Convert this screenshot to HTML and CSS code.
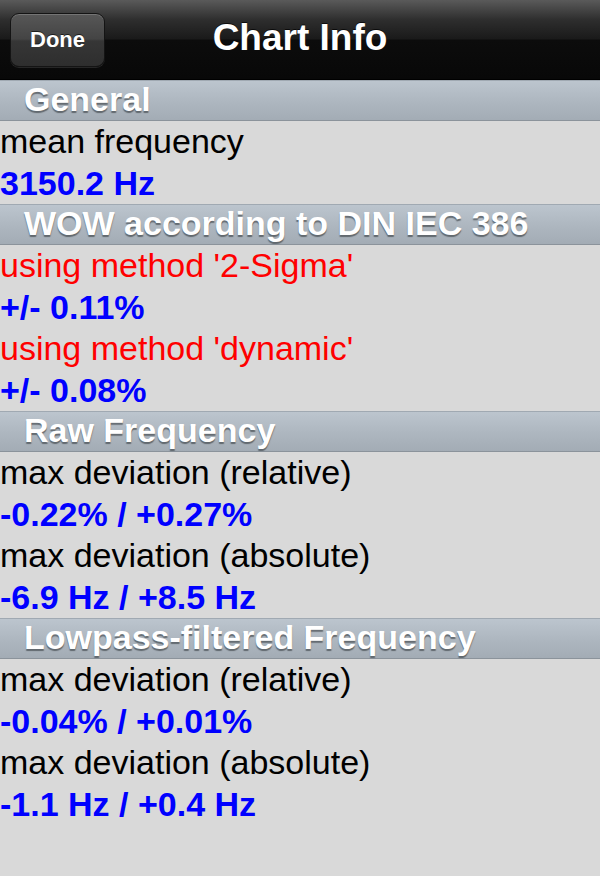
FILE: index.html
```html
<!DOCTYPE html>
<html>
<head>
<meta charset="utf-8">
<title>Chart Info</title>
<link rel="stylesheet" href="styles.css">
</head>
<body>
<div class="screen">
  <header class="navbar">
    <div class="nav-left"><button class="btn-done">Done</button></div>
    <h1 class="nav-title">Chart Info</h1>
    <div class="nav-right"></div>
  </header>

  <section class="group">
    <div class="group-header">General</div>
    <div class="row label">mean frequency</div>
    <div class="row value">3150.2 Hz</div>
  </section>

  <section class="group">
    <div class="group-header">WOW according to DIN IEC 386</div>
    <div class="row label red">using method '2-Sigma'</div>
    <div class="row value">+/- 0.11%</div>
    <div class="row label red">using method 'dynamic'</div>
    <div class="row value">+/- 0.08%</div>
  </section>

  <section class="group">
    <div class="group-header">Raw Frequency</div>
    <div class="row label">max deviation (relative)</div>
    <div class="row value">-0.22% / +0.27%</div>
    <div class="row label">max deviation (absolute)</div>
    <div class="row value">-6.9 Hz / +8.5 Hz</div>
  </section>

  <section class="group">
    <div class="group-header">Lowpass-filtered Frequency</div>
    <div class="row label">max deviation (relative)</div>
    <div class="row value">-0.04% / +0.01%</div>
    <div class="row label">max deviation (absolute)</div>
    <div class="row value">-1.1 Hz / +0.4 Hz</div>
  </section>
</div>
</body>
</html>
```

FILE: styles.css
```css
html, body {
  margin: 0;
  padding: 0;
  background: #d9d9d9;
}

body {
  font-family: "Liberation Sans", Arial, Helvetica, sans-serif;
  width: 600px;
  height: 876px;
  overflow: hidden;
}

.screen {
  display: flex;
  flex-direction: column;
}

.navbar {
  height: 80px;
  box-sizing: border-box;
  display: grid;
  grid-template-columns: 1fr auto 1fr;
  align-items: center;
  background: linear-gradient(to bottom,
    #5a5a5a 0%,
    #2e2e2e 25%,
    #1a1a1a 49%,
    #0c0c0c 51%,
    #080808 100%);
  border-bottom: 1px solid #000;
}

.nav-left {
  display: flex;
  align-items: center;
  padding-left: 10px;
  padding-top: 1px;
}

.btn-done {
  width: 95px;
  height: 54px;
  box-sizing: border-box;
  border-radius: 9px;
  border: 1px solid #141414;
  background: linear-gradient(to bottom,
    #575757 0%,
    #444 48%,
    #363636 52%,
    #2e2e2e 100%);
  box-shadow: inset 0 1px 0 rgba(255,255,255,0.18), 0 1px 0 rgba(255,255,255,0.12);
  color: #fff;
  font-family: "Liberation Sans", Arial, Helvetica, sans-serif;
  font-weight: bold;
  font-size: 22px;
  text-shadow: 0 -1px 0 rgba(0,0,0,0.6);
  padding: 0;
}

.nav-title {
  margin: 0;
  margin-top: -4px;
  color: #fff;
  font-size: 37px;
  font-weight: bold;
  text-shadow: 0 -1px 0 rgba(0,0,0,0.7);
}

.group {
  display: flex;
  flex-direction: column;
}

.group-header {
  height: 41px;
  box-sizing: border-box;
  display: flex;
  align-items: center;
  padding-left: 24px;
  padding-bottom: 2px;
  border-top: 1px solid #a0a9b2;
  border-bottom: 1px solid #8b939b;
  background: linear-gradient(to bottom, #bcc5ce 0%, #adb6bf 55%, #a3acb5 100%);
  color: #fff;
  font-size: 34px;
  font-weight: bold;
  text-shadow: 0 2px 1px rgba(40,45,50,0.55);
}

.row {
  height: 41.5px;
  display: flex;
  align-items: center;
  font-size: 34px;
  white-space: nowrap;
}

.label {
  color: #000;
}

.label.red {
  color: #ff0000;
}

.value {
  color: #0000ff;
  font-weight: bold;
}
```
